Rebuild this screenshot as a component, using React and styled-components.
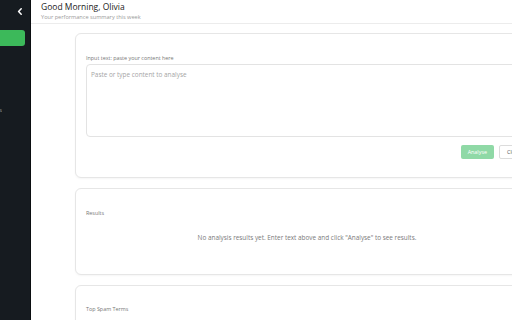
import styled, { createGlobalStyle } from 'styled-components';

const GlobalStyle = createGlobalStyle`
    html, body {
        margin: 0;
        padding: 0;
        height: 100%;
        overflow: hidden;
        background: #ffffff;
        font-family: 'Open Sans', 'Liberation Sans', sans-serif;
    }
    #root {
        height: 100%;
    }
`;

const ChevronLeft = () => (
    <svg width="6" height="7" viewBox="0 0 6 7">
        <path d="M4.2 0.8 L1.6 3.5 L4.2 6.2" fill="none" stroke="#ffffff" strokeWidth="1.5" strokeLinecap="round" strokeLinejoin="round" />
    </svg>
);

const App = () => {
    return (
        <>
            <GlobalStyle />
            <Layout>
                <Sidebar>
                    <CollapseBtn>
                        <ChevronLeft />
                    </CollapseBtn>
                    <NavButton />
                    <NavItem>
                        <span>Results</span>
                    </NavItem>
                </Sidebar>
                <Main>
                    <Header>
                        <Title>Good Morning, Olivia</Title>
                        <Subtitle>Your performance summary this week</Subtitle>
                    </Header>
                    <Content>
                        <Card $pt={20} $pb={18}>
                            <Label>Input text: paste your content here</Label>
                            <TextArea placeholder="Paste or type content to analyse" />
                            <Actions>
                                <PrimaryBtn disabled>Analyse</PrimaryBtn>
                                <SecondaryBtn>Clear</SecondaryBtn>
                            </Actions>
                        </Card>
                        <Card $pt={20} $pb={32}>
                            <Label>Results</Label>
                            <Empty>No analysis results yet. Enter text above and click "Analyse" to see results.</Empty>
                        </Card>
                        <Card $pt={19} $pb={30}>
                            <Label>Top Spam Terms</Label>
                        </Card>
                    </Content>
                </Main>
            </Layout>
        </>
    );
};

export default App;

const Layout = styled.div`
    display: flex;
    height: 100%;
`;

const Sidebar = styled.aside`
    width: 30px;
    flex-shrink: 0;
    background: #161b20;
    border-right: 1px solid #0b0e11;
    display: flex;
    flex-direction: column;
    overflow: hidden;
`;

const CollapseBtn = styled.div`
    height: 22px;
    display: flex;
    align-items: center;
    padding-left: 17px;
`;

const NavButton = styled.div`
    margin-top: 8px;
    width: 25px;
    height: 16px;
    background: #3cb95a;
    border-radius: 0 3px 3px 0;
`;

const NavItem = styled.div`
    margin-top: 61px;
    width: 2px;
    overflow: hidden;
    display: flex;
    justify-content: flex-end;
    font-size: 5px;
    color: #9aa0a6;
    white-space: nowrap;
`;

const Main = styled.main`
    flex: 1;
    min-width: 0;
    overflow: hidden;
`;

const Header = styled.header`
    height: 24px;
    padding: 1px 10px 0;
    box-sizing: border-box;
    border-bottom: 1px solid #ececec;
`;

const Title = styled.div`
    font-size: 8.5px;
    line-height: 12px;
    color: #222;
`;

const Subtitle = styled.div`
    font-size: 5.6px;
    line-height: 8px;
    color: #9a9a9a;
`;

const Content = styled.div`
    padding: 9px 0 0 44px;
    display: flex;
    flex-direction: column;
    gap: 10px;
`;

const Card = styled.section`
    width: 466px;
    flex-shrink: 0;
    box-sizing: border-box;
    padding: ${({ $pt }) => $pt}px 12px ${({ $pb }) => $pb}px 10px;
    border: 1px solid #e6e6e6;
    border-radius: 6px;
    box-shadow: 0 1px 2px rgba(0, 0, 0, 0.04);
    background: #fff;
`;

const Label = styled.div`
    font-size: 5.4px;
    line-height: 8px;
    color: #777;
`;

const TextArea = styled.textarea`
    display: block;
    margin-top: 2px;
    width: 100%;
    height: 73px;
    box-sizing: border-box;
    border: 1px solid #e3e3e3;
    border-radius: 4px;
    padding: 5px 4px;
    resize: none;
    font-family: inherit;
    font-size: 6.4px;
    color: #333;
    &::placeholder {
        color: #a5a5a5;
    }
`;

const Actions = styled.div`
    display: flex;
    justify-content: flex-end;
    gap: 5px;
    margin-top: 8px;
`;

const PrimaryBtn = styled.button`
    height: 14px;
    padding: 0 7px;
    border: none;
    border-radius: 2px;
    background: #8fd9a6;
    color: #fff;
    font-family: inherit;
    font-size: 5.4px;
`;

const SecondaryBtn = styled.button`
    height: 14px;
    padding: 0 7px;
    border: 1px solid #dcdcdc;
    border-radius: 2px;
    background: #fff;
    color: #555;
    font-family: inherit;
    font-size: 5.4px;
`;

const Empty = styled.div`
    margin-top: 17px;
    text-align: center;
    font-size: 6.4px;
    line-height: 8px;
    color: #7a7a7a;
`;
